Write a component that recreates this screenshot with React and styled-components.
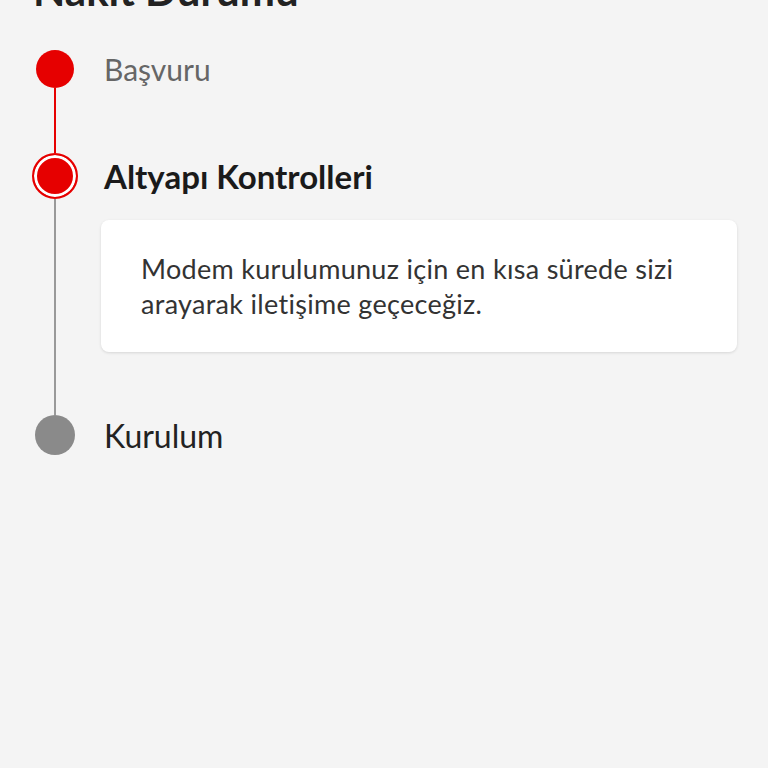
import styled, { createGlobalStyle } from "styled-components";

const GlobalStyle = createGlobalStyle`
  html, body {
    margin: 0;
    padding: 0;
    background: #f4f4f4;
    font-family: Lato, "Noto Sans", sans-serif;
  }
`;

const Page = styled.div`
  padding: 0 31px 0 32px;
  min-height: 768px;
  overflow: hidden;
`;

const Title = styled.h1`
  margin: -34px 0 0 1px;
  font-size: 42px;
  line-height: 48px;
  font-weight: 700;
  color: #222;
`;

const Timeline = styled.div`
  margin-top: 36px;
  display: flex;
  flex-direction: column;
`;

const Step = styled.div`
  display: grid;
  grid-template-columns: 46px 1fr;
  column-gap: 23px;
`;

const Marker = styled.div`
  display: flex;
  flex-direction: column;
  align-items: center;
`;

const Dot = styled.div`
  width: ${(p) => p.size}px;
  height: ${(p) => p.size}px;
  border-radius: 50%;
  background: ${(p) => p.color};
  flex-shrink: 0;
`;

const RingDot = styled.div`
  width: 46px;
  height: 46px;
  box-sizing: border-box;
  border-radius: 50%;
  border: 2px solid #e60000;
  background: #e60000;
  box-shadow: inset 0 0 0 3px #fff;
  flex-shrink: 0;
`;

const Line = styled.div`
  flex: 1;
  width: 2px;
  background: ${(p) => p.color};
`;

const Content = styled.div`
  padding-bottom: ${(p) => p.bottom || 0}px;
`;

const Label = styled.div`
  height: ${(p) => p.h}px;
  display: flex;
  align-items: center;
  padding-left: 3px;
  font-size: ${(p) => p.size || 30}px;
  font-weight: ${(p) => (p.active ? 700 : 400)};
  color: ${(p) => p.color};
`;

const Card = styled.div`
  margin-top: 21px;
  background: #fff;
  border-radius: 8px;
  box-shadow: 0 1px 3px rgba(0, 0, 0, 0.12);
  padding: 31px 38px 31px 40px;
  font-size: 27px;
  letter-spacing: 0.3px;
  line-height: 35px;
  color: #333;
`;

export default function App() {
  return (
    <>
      <GlobalStyle />
      <Page>
        <Title>Nakit Durumu</Title>
        <Timeline>
          <Step>
            <Marker>
              <Dot size={38} color="#e60000" />
              <Line color="#e60000" />
            </Marker>
            <Content bottom={65}>
              <Label h={38} color="#666">
                Başvuru
              </Label>
            </Content>
          </Step>
          <Step>
            <Marker>
              <RingDot />
              <Line color="#999" />
            </Marker>
            <Content bottom={63}>
              <Label h={46} size={33} active color="#1a1a1a">
                Altyapı Kontrolleri
              </Label>
              <Card>
                Modem kurulumunuz için en kısa sürede sizi arayarak iletişime
                geçeceğiz.
              </Card>
            </Content>
          </Step>
          <Step>
            <Marker>
              <Dot size={40} color="#8a8a8a" />
            </Marker>
            <Content>
              <Label h={40} size={32} color="#222">
                Kurulum
              </Label>
            </Content>
          </Step>
        </Timeline>
      </Page>
    </>
  );
}
